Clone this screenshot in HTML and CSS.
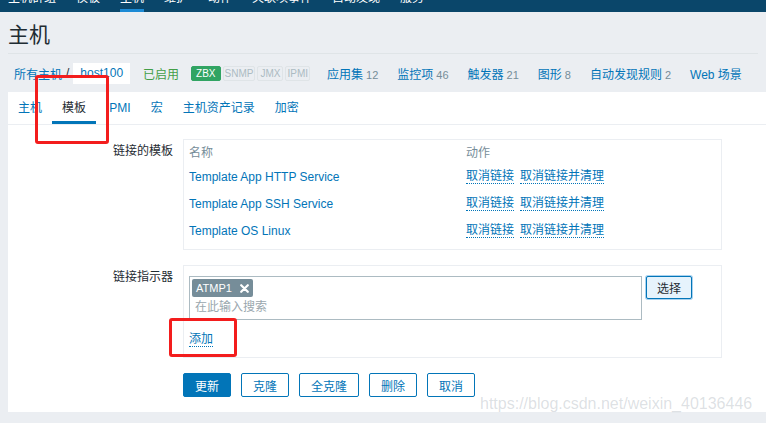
FILE: index.html
```html
<!DOCTYPE html>
<html lang="zh-CN">
<head>
<meta charset="utf-8">
<title>主机</title>
<link rel="stylesheet" href="styles.css">
</head>
<body>
<nav class="topnav">
  <a>主机群组</a><a>模板</a><a class="on">主机</a><a>维护</a><a>动作</a><a>关联项事件</a><a>自动发现</a><a>服务</a>
</nav>
<header class="title"><h1>主机</h1></header>
<div class="crumbs">
  <a class="lnk">所有主机</a><span class="sep">/</span><span class="cur">host100</span>
  <span class="enabled">已启用</span>
  <span class="badges"><span class="b zbx">ZBX</span><span class="b">SNMP</span><span class="b jmx">JMX</span><span class="b">IPMI</span></span>
  <a class="lnk item first">应用集<span class="cnt">12</span></a>
  <a class="lnk item">监控项<span class="cnt">46</span></a>
  <a class="lnk item">触发器<span class="cnt">21</span></a>
  <a class="lnk item">图形<span class="cnt">8</span></a>
  <a class="lnk item">自动发现规则<span class="cnt">2</span></a>
  <a class="lnk item">Web 场景</a>
</div>
<main class="panel">
  <ul class="tabs">
    <li>主机</li><li class="active">模板</li><li>IPMI</li><li>宏</li><li>主机资产记录</li><li>加密</li>
  </ul>
  <div class="form">
    <div class="label">链接的模板</div>
    <div class="box box-t">
      <div class="row head"><div class="c-name">名称</div><div class="c-act">动作</div></div>
      <div class="row"><div class="c-name"><a class="lnk">Template App HTTP Service</a></div><div class="c-act"><a class="act">取消链接</a><a class="act">取消链接并清理</a></div></div>
      <div class="row"><div class="c-name"><a class="lnk">Template App SSH Service</a></div><div class="c-act"><a class="act">取消链接</a><a class="act">取消链接并清理</a></div></div>
      <div class="row"><div class="c-name"><a class="lnk">Template OS Linux</a></div><div class="c-act"><a class="act">取消链接</a><a class="act">取消链接并清理</a></div></div>
    </div>
    <div class="label">链接指示器</div>
    <div class="box box-l">
      <div class="ms-line">
        <div class="ms">
          <div class="chips"><span class="chip">ATMP1<svg class="x" width="9" height="9" viewBox="0 0 9 9"><path d="M1.2 1.2L7.8 7.8M7.8 1.2L1.2 7.8" stroke="#fff" stroke-width="2.2" stroke-linecap="round"/></svg></span></div>
          <div class="ph">在此输入搜索</div>
        </div>
        <button class="sel">选择</button>
      </div>
      <div class="add"><a class="act">添加</a></div>
    </div>
    <div></div>
    <div class="btns">
      <button class="btn primary">更新</button><button class="btn">克隆</button><button class="btn">全克隆</button><button class="btn">删除</button><button class="btn">取消</button>
    </div>
  </div>
</main>
<div class="mark mark-tab"></div>
<div class="mark mark-add"></div>
<div class="watermark">https://blog.csdn.net/weixin_40136446</div>
</body>
</html>
```
FILE: styles.css
```css
* { box-sizing: border-box; }
body {
  margin: 0;
  width: 766px;
  height: 423px;
  overflow: hidden;
  position: relative;
  background: #ebeef2;
  font-family: "Liberation Sans", "Noto Sans CJK SC", sans-serif;
  font-size: 12px;
  color: #1f2c33;
}
a { text-decoration: none; }

.topnav {
  height: 12px;
  background: #0a466a;
  display: flex;
  gap: 20px;
  padding-left: 8px;
  overflow: hidden;
}
.topnav a {
  color: #fff;
  line-height: 12px;
  height: 20px;
  margin-top: -8px;
  white-space: nowrap;
}
.topnav a.on { box-shadow: inset 0 -3px 0 #1c8ad5; }

.title {
  margin: 0 8px;
  padding: 11px 0 6px;
  border-bottom: 1px solid #dfe4e7;
}
.title h1 {
  margin: 0;
  font-size: 21px;
  line-height: 24px;
  font-weight: normal;
  color: #1f2c33;
}

.crumbs {
  height: 38px;
  display: flex;
  align-items: center;
  padding-left: 14px;
  white-space: nowrap;
}
.lnk { color: #0275b8; }
.sep { margin: 0 4px; color: #1f2c33; }
.cur {
  background: #fff;
  color: #0275b8;
  height: 21px;
  line-height: 21px;
  padding: 0 7px;
}
.enabled { color: #429e47; margin-left: 13px; }
.badges { display: flex; gap: 2px; margin-left: 12px; }
.b {
  font-size: 10px;
  line-height: 13px;
  height: 15px;
  padding: 0 1px;
  border: 1px solid #dfe4e7;
  background: #ebeef2;
  color: #acbbc2;
  border-radius: 2px;
}
.b.jmx { padding: 0 2px; }
.b.zbx {
  padding: 0 4px;
  background: #31a463;
  border-color: #31a463;
  color: #fff;
}
.item { margin-left: 19px; }
.item.first { margin-left: 17px; }
.cnt { color: #768d99; font-size: 11px; margin-left: 3px; }

.panel {
  margin-left: 8px;
  background: #fff;
  padding-bottom: 15px;
}
.tabs {
  list-style: none;
  margin: 0;
  padding: 0;
  display: flex;
  height: 33px;
  border-bottom: 1px solid #ebeef2;
}
.tabs li {
  padding: 0 10px;
  line-height: 32px;
  height: 32px;
  color: #0275b8;
}
.tabs li.active {
  color: #1f2c33;
  box-shadow: inset 0 -3px 0 #0275b8;
}

.form {
  display: grid;
  grid-template-columns: 175px 539px;
  row-gap: 15px;
  padding-top: 14px;
}
.label {
  text-align: right;
  padding: 5px 10px 0 0;
  line-height: 14px;
}
.box {
  border: 1px solid #ebeef2;
  padding: 3px 5px 5px;
}
.row { display: flex; align-items: center; height: 27px; line-height: 14px; }
.row.head { height: 20px; color: #768d99; }
.c-name { width: 277px; }
.c-act { display: flex; gap: 6px; }
.act {
  color: #0275b8;
  border-bottom: 1px dotted #0275b8;
}

.box-l { padding: 10px 5px 11px; }
.ms-line { display: flex; align-items: flex-start; }
.ms {
  width: 453px;
  height: 44px;
  border: 1px solid #acbbc2;
  padding: 2px;
}
.chips { height: 18px; display: flex; }
.chip {
  display: flex;
  align-items: center;
  gap: 8px;
  height: 18px;
  padding: 0 4px;
  background: #768d99;
  color: #fff;
  border-radius: 2px;
  font-size: 11px;
}
.x { display: block; }
.ph {
  height: 20px;
  line-height: 20px;
  padding-left: 3px;
  color: #9aa7ae;
}
.sel {
  margin: 0 0 0 4px;
  width: 46px;
  height: 23px;
  padding: 0;
  border: 1px solid #0275b8;
  border-radius: 2px;
  background: #e6f3fc;
  box-shadow: 0 0 0 1px #a9d2ef;
  font: inherit;
  color: #1f2c33;
}
.add { margin-top: 12px; line-height: 14px; }

.btns { display: flex; gap: 10px; }
.btn {
  height: 24px;
  padding: 0 11px;
  border: 1px solid #0275b8;
  border-radius: 2px;
  background: #fff;
  color: #0275b8;
  font: inherit;
}
.btn.primary { background: #0275b8; color: #fff; }

.mark {
  position: absolute;
  border: 3px solid #f31d1d;
  border-radius: 3px;
}
.mark-tab { left: 35px; top: 75px; width: 74px; height: 69px; }
.mark-add { left: 169px; top: 318px; width: 68px; height: 39px; }

.watermark {
  position: absolute;
  left: 480px;
  top: 395px;
  font-size: 16px;
  line-height: 18px;
  color: rgba(150, 160, 170, 0.32);
  white-space: nowrap;
}
```
